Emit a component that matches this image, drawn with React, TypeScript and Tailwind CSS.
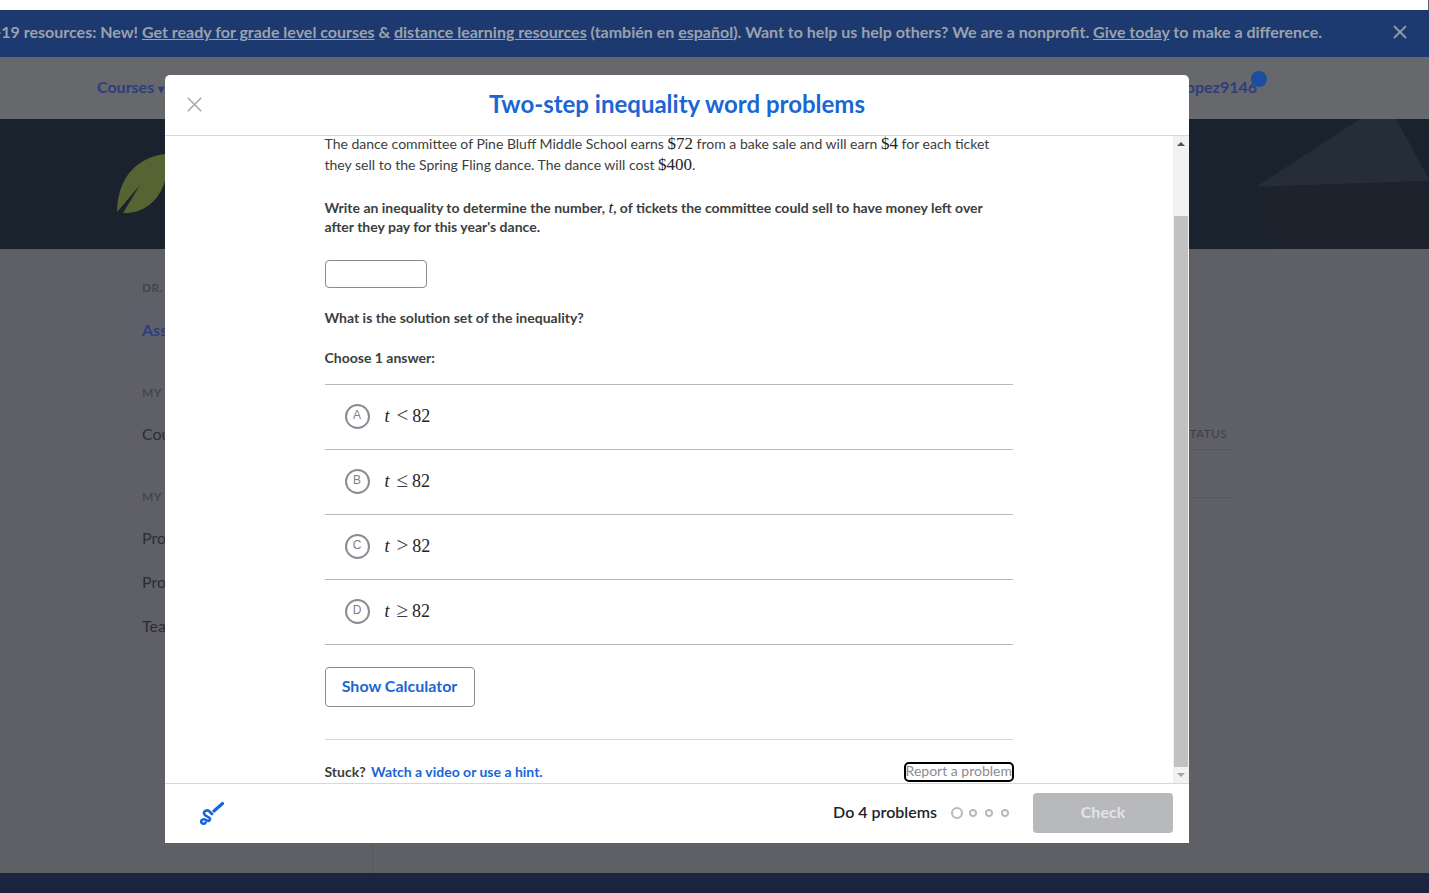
import React from 'react';
import { X } from 'lucide-react';

const lato = 'font-["Lato","Liberation_Sans",sans-serif]';

const Math = ({ children }: { children: React.ReactNode }) => (
  <span className='font-["Liberation_Serif",serif] text-[17px] leading-none font-normal text-[#21242c]'>{children}</span>
);

const Choice = ({ letter, rel }: { letter: string; rel: string }) => (
  <div className="flex h-[65px] items-center border-b border-[#b8b9bb] pb-[2px] pl-5">
    <span className='flex h-[25px] w-[25px] items-center justify-center rounded-full border-2 border-[#8b8c90] pb-[2px] font-["Liberation_Sans",sans-serif] text-[12px] text-[#7d7e82]'>
      {letter}
    </span>
    <span className='ml-[15px] flex items-center pb-[1px] font-["Liberation_Serif",serif] text-[18px] leading-none text-[#21242c]'>
      <i>t</i>
      <span className="mr-[4px] ml-[7px] text-[21px] font-light text-[#3b3e40]">{rel}</span>82
    </span>
  </div>
);

const Background = () => (
  <div className="flex h-[893px] flex-col bg-[#5f6065]">
    <div className="h-[10px] w-[1428px] bg-white" />
    <div className="flex h-[47px] items-center justify-end overflow-hidden bg-[#1d3a70] pr-[107px] pb-[3px] text-[16px] font-bold whitespace-nowrap text-[#9ba1ad]">
      <span>
        COVID-19 resources: New! <u>Get ready for grade level courses</u> &amp; <u>distance learning resources</u>{' '}
        (también en <u>español</u>). Want to help us help others? We are a nonprofit. <u>Give today</u> to make a
        difference.
      </span>
    </div>
    <div className="flex h-[62px] items-center justify-between bg-[#67686c] pr-[172px] pb-[2px] pl-[97px] text-[16px] font-bold text-[#2c3e7c]">
      <span>
        Courses <span className="text-[12px]">▾</span>
      </span>
      <span>mlopez9146</span>
    </div>
    <div className="h-[130px] overflow-hidden bg-[#1a232d]">
      <svg width="1429" height="130" viewBox="0 0 1429 130">
        <polygon points="1256,68 1360,0 1396,0 1429,60 1429,62" fill="#242d38" />
        <polygon points="1256,68 1429,62 1429,130 1270,130" fill="#1d222d" />
        <path d="M117 93 C118 55 140 38 165 35 L165 62 C158 85 140 95 123 94 L140 66 Z" fill="#566433" />
      </svg>
    </div>
    <div className="flex flex-1">
      <div className="flex w-[373px] flex-col border-r border-[#56575b] pt-[32px] pl-[142px] text-[16px] leading-[20px] text-[#2b2d36]">
        <span className="text-[12px] leading-[14px] font-bold tracking-wide text-[#45464b]">DR.</span>
        <div className="mt-[13px] -ml-[25px] flex h-[44px] items-center rounded-l bg-[#5d6068] pl-[25px] font-bold text-[#2c3e7c]">
          Assignments
        </div>
        <span className="mt-[34px] text-[12px] leading-[14px] font-bold tracking-wide text-[#45464b]">MY</span>
        <span className="mt-[24px]">Courses</span>
        <span className="mt-[46px] text-[12px] leading-[14px] font-bold tracking-wide text-[#45464b]">MY</span>
        <span className="mt-[24px]">Progress</span>
        <span className="mt-[24px]">Profile</span>
        <span className="mt-[24px]">Teachers</span>
      </div>
      <div className="flex flex-1 justify-end pt-[176px] pr-[194px]">
        <div className="w-[46px] text-[12px] font-normal tracking-wide whitespace-nowrap text-[#3f4045]">
          <div className="flex h-[25px] justify-end border-b border-[#56575b] pr-[8px]">STATUS</div>
          <div className="h-[48px] border-b border-[#56575b]" />
        </div>
      </div>
    </div>
    <div className="h-[20px] bg-[#1b2540]" />
  </div>
);

const Modal = () => (
  <div className="absolute top-[75px] left-[165px] flex h-[768px] w-[1024px] flex-col overflow-hidden rounded-t-[5px] bg-white">
    <div className="relative flex h-[61px] shrink-0 items-center justify-center border-b border-[#d6d8da] pb-[3px]">
      <X size={25} strokeWidth={1.6} className="absolute top-[17px] left-[17px] text-[#a9aaad]" />
      <h1 className="text-[24px] font-bold text-[#1a66d4]">Two-step inequality word problems</h1>
    </div>

    <div className="flex min-h-0 flex-1">
      <div className="flex-1 overflow-hidden pl-[159.5px]">
        <div className="-mt-[3px] w-[688.5px] text-[#3b3e40]">
          <p className="text-[14px] leading-[21px]">
            The dance committee of Pine Bluff Middle School earns <Math>$72</Math> from a bake sale and will earn{' '}
            <Math>$4</Math> for each ticket they sell to the Spring Fling dance. The dance will cost <Math>$400</Math>.
          </p>
          <p className="mt-[23px] text-[14px] leading-[19px] font-bold">
            Write an inequality to determine the number, <Math><i>t</i></Math>, of tickets the committee could sell to
            have money left over after they pay for this year's dance.
          </p>
          <input className="mt-[24px] block h-[28px] w-[102px] rounded border border-[#8b8c90] bg-white" />
          <p className="mt-[20px] text-[14px] leading-[20px] font-bold">What is the solution set of the inequality?</p>
          <p className="mt-[20px] text-[14px] leading-[20px] font-bold">Choose 1 answer:</p>
          <div className="mt-[16px] border-t border-[#b8b9bb]">
            <Choice letter="A" rel="<" />
            <Choice letter="B" rel="≤" />
            <Choice letter="C" rel=">" />
            <Choice letter="D" rel="≥" />
          </div>
          <button className="mt-[22px] flex h-[40px] w-[150px] items-center justify-center rounded border border-[#8b8c90] bg-white pb-[2px] text-[16px] font-bold text-[#1a66d4]">
            Show Calculator
          </button>
          <div className="mt-[32px] flex h-[44px] items-center justify-between border-t border-[#d6d8da] pt-[20px] text-[14px]">
            <span className="font-bold">
              Stuck? <span className="ml-[2px] text-[#1a66d4]">Watch a video or use a hint.</span>
            </span>
            <a className="mr-[1px] inline-block rounded-[3px] pb-[2px] leading-[14px] text-[#8b8c90] outline-2 outline-black">
              Report a problem
            </a>
          </div>
        </div>
      </div>
      <div className="flex w-[16px] shrink-0 flex-col items-center bg-[#f1f1f1]">
        <div className="flex h-[16px] items-center justify-center">
          <div className="h-0 w-0 border-x-[4px] border-b-[4px] border-x-transparent border-b-[#505050]" />
        </div>
        <div className="mt-[64px] w-[14px] flex-1 bg-[#c1c1c1]" />
        <div className="flex h-[16px] items-center justify-center">
          <div className="h-0 w-0 border-x-[4px] border-t-[4px] border-x-transparent border-t-[#a3a3a3]" />
        </div>
      </div>
    </div>

    <div className="flex h-[60px] shrink-0 items-center justify-between border-t border-[#d6d8da] pr-[16px] pb-[2px] pl-[33px]">
      <svg width="26" height="26" viewBox="0 0 26 26" fill="none" stroke="#1a66d4" strokeLinecap="round" strokeLinejoin="round">
        <path
          d="M7.5 22.5 C6 25 2 23 3.5 20.5 C5 18.5 7 19 9 20.5 C11.5 22 13 19 11 17.5 C9 16 6.5 16 6 13.5 C5.5 11 9 9.5 11 11 L14 14"
          strokeWidth="2.6"
        />
        <path d="M16 11 L24.5 3.5" strokeWidth="3.2" />
      </svg>
      <div className="flex items-center">
        <span className="pb-[2px] text-[16px] font-semibold text-[#21242c]">Do 4 problems</span>
        <div className="mr-[24px] ml-[14px] flex items-center gap-[8px]">
          <span className="-mr-[2px] h-[12px] w-[12px] rounded-full border-2 border-[#b8b9bb]" />
          <span className="h-[8px] w-[8px] rounded-full border-2 border-[#b8b9bb]" />
          <span className="h-[8px] w-[8px] rounded-full border-2 border-[#b8b9bb]" />
          <span className="h-[8px] w-[8px] rounded-full border-2 border-[#b8b9bb]" />
        </div>
        <button className="h-[40px] w-[140px] rounded bg-[#b8b9bb] pb-[2px] text-[16px] font-bold text-[#e3e4e5]">
          Check
        </button>
      </div>
    </div>
  </div>
);

export default function App() {
  return (
    <div className={`relative h-[893px] overflow-hidden bg-white ${lato}`}>
      <Background />
      <div className="absolute top-[10px] right-[18px] flex h-[44px] items-center text-[#8f97a8]">
        <X size={22} />
      </div>
      <div className="absolute top-[71px] left-[1251px] h-[16px] w-[16px] rounded-full bg-[#1b4da0]" />
      <Modal />
    </div>
  );
}
